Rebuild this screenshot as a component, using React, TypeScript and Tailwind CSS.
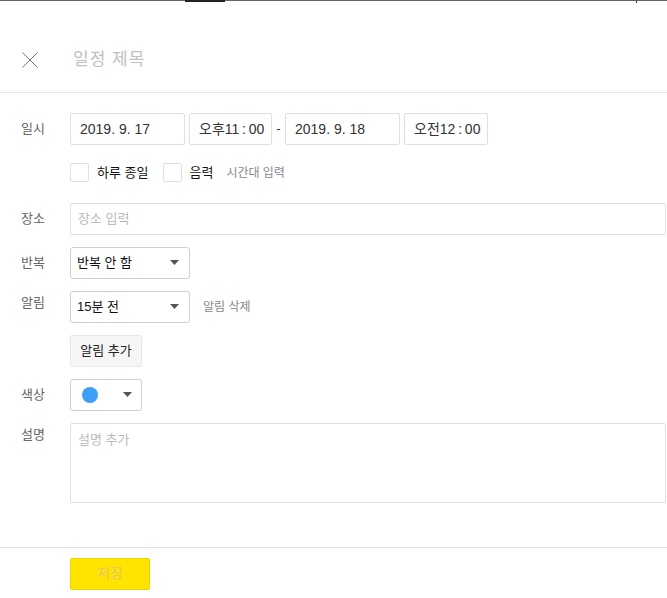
function Caret() {
  return (
    <svg width="9" height="5" viewBox="0 0 9 5" className="shrink-0">
      <path d="M0 0h9L4.5 5z" fill="#555" />
    </svg>
  );
}

function Row({ label, children, labelPad = 'pt-[6px]' }: { label: string; children: React.ReactNode; labelPad?: string }) {
  return (
    <div className="flex items-start">
      <div className={`w-[70px] shrink-0 pl-[21px] ${labelPad} text-[13px] leading-[20px] text-[#666]`}>{label}</div>
      <div className="flex-1 min-w-0">{children}</div>
    </div>
  );
}

export default function App() {
  return (
    <div
      className="relative w-[667px] h-[598px] bg-white overflow-hidden text-[#333]"
      style={{ fontFamily: '"Liberation Sans", "Noto Sans CJK KR", sans-serif' }}
    >
      {/* top edge of the page behind */}
      <div className="absolute top-0 left-0 right-0 h-px bg-[#666]" />
      <div className="absolute top-0 left-[185px] w-[40px] h-[2px] bg-[#222]" />
      <div className="absolute top-0 left-[636px] w-px h-[3px] bg-[#444]" />

      <header className="h-[93px] flex items-center border-b border-[#e5e5e5] pt-[32px] pb-[4px]">
        <button className="w-[73px] pl-[22px] flex items-center">
          <svg width="16" height="16" viewBox="0 0 16 16">
            <path d="M0.5 0.5L15.5 15.5M15.5 0.5L0.5 15.5" stroke="#777" strokeWidth="1" />
          </svg>
        </button>
        <div className="text-[17px] text-[#c0c0c0] tracking-[1px]">일정 제목</div>
      </header>

      <div className="pt-[20px] flex flex-col">
        <Row label="일시">
          <div className="flex items-center text-[14px] whitespace-nowrap">
            <div className="w-[115px] h-[32px] border border-[#e0e0e0] rounded-[2px] flex items-center px-[9px]">2019. 9. 17</div>
            <div className="ml-[4px] w-[83px] h-[32px] border border-[#e0e0e0] rounded-[2px] flex items-center px-[9px]">오후11{'\u2009:\u2009'}00</div>
            <div className="w-[13px] text-center text-[13px]">-</div>
            <div className="w-[115px] h-[32px] border border-[#e0e0e0] rounded-[2px] flex items-center px-[9px]">2019. 9. 18</div>
            <div className="ml-[4px] w-[84px] h-[32px] border border-[#e0e0e0] rounded-[2px] flex items-center px-[9px]">오전12{'\u2009:\u2009'}00</div>
          </div>
          <div className="mt-[18px] flex items-center text-[13px]">
            <span className="w-[19px] h-[19px] border border-[#e0e0e0] rounded-[2px]" />
            <span className="ml-[8px] text-[#111]">하루 종일</span>
            <span className="ml-[15px] w-[19px] h-[19px] border border-[#e0e0e0] rounded-[2px]" />
            <span className="ml-[7px] text-[#111]">음력</span>
            <span className="ml-[13px] text-[12px] text-[#888]">시간대 입력</span>
          </div>
        </Row>

        <div className="mt-[20px]">
          <Row label="장소">
            <div className="mr-px h-[32px] border border-[#e0e0e0] rounded-[2px] flex items-center px-[7px] text-[13px] text-[#bbb]">장소 입력</div>
          </Row>
        </div>

        <div className="mt-[12px]">
          <Row label="반복">
            <div className="w-[120px] h-[32px] border border-[#cfcfcf] rounded-[3px] flex items-center justify-between pl-[6px] pr-[10px] text-[13px] text-[#111]">
              <span>반복 안 함</span>
              <Caret />
            </div>
          </Row>
        </div>

        <div className="mt-[12px]">
          <Row label="알림" labelPad="pt-[2px]">
            <div className="flex items-center">
              <div className="w-[120px] h-[32px] border border-[#cfcfcf] rounded-[3px] flex items-center justify-between pl-[6px] pr-[10px] text-[13px] text-[#111]">
                <span>15분 전</span>
                <Caret />
              </div>
              <span className="ml-[13px] text-[12px] text-[#888]">알림 삭제</span>
            </div>
            <button className="mt-[12px] w-[72px] h-[32px] bg-[#f6f6f6] border border-[#e8e8e8] rounded-[2px] text-[13px] text-[#222]">알림 추가</button>
          </Row>
        </div>

        <div className="mt-[12px]">
          <Row label="색상">
            <div className="w-[72px] h-[32px] border border-[#cfcfcf] rounded-[3px] flex items-center justify-between pl-[11px] pr-[9px]">
              <span className="w-[16px] h-[16px] rounded-full bg-[#3d9ef6]" />
              <Caret />
            </div>
          </Row>
        </div>

        <div className="mt-[12px]">
          <Row label="설명" labelPad="pt-[2px]">
            <div className="mr-px h-[80px] border border-[#e0e0e0] rounded-[2px] px-[7px] pt-[6px] text-[13px] text-[#bbb]">설명 추가</div>
          </Row>
        </div>

        <div className="mt-[44px] border-t border-[#e2e2e2] pt-[10px] pl-[70px]">
          <button className="w-[80px] h-[32px] bg-[#ffe400] border border-[#f2d200] rounded-[2px] text-[14px] text-[#e0c76a]">저장</button>
        </div>
      </div>
    </div>
  );
}
